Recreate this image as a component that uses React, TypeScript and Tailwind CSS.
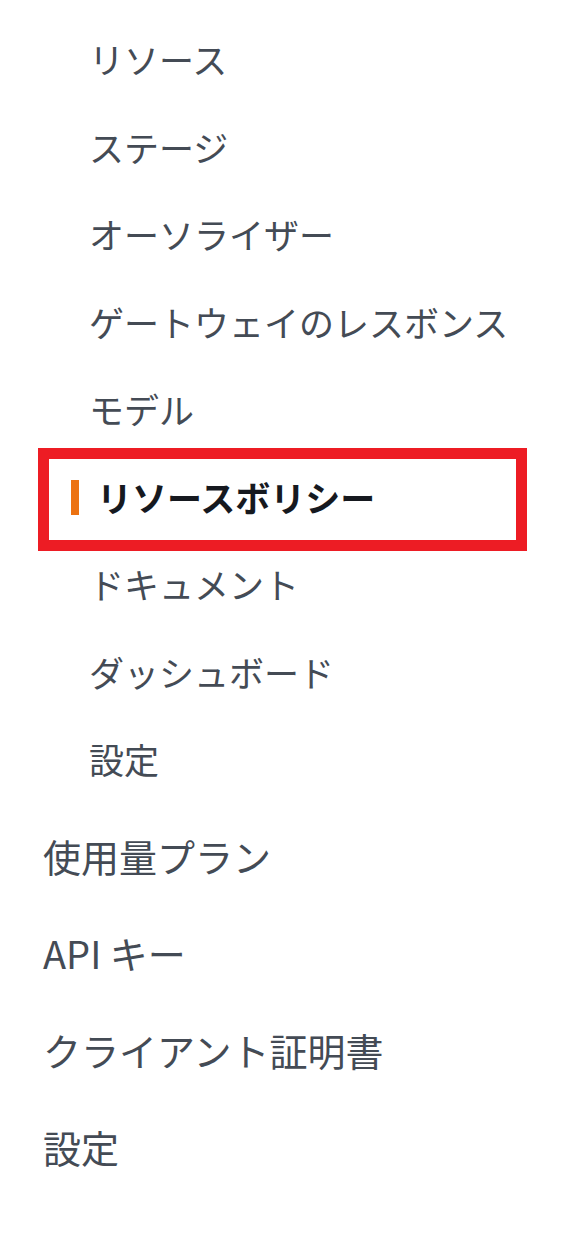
const subItems = [
  "リソース",
  "ステージ",
  "オーソライザー",
  "ゲートウェイのレスボンス",
  "モデル",
  "リソースボリシー",
  "ドキュメント",
  "ダッシュボード",
  "設定",
];

const topItems = ["使用量プラン", "API キー", "クライアント証明書", "設定"];

const ACTIVE = "リソースボリシー";

export default function App() {
  return (
    <div
      className="w-[586px] h-[1245px] bg-white overflow-hidden pt-[15px]"
      style={{ fontFamily: '"Noto Sans CJK JP", "Noto Sans", sans-serif' }}
    >
      <ul>
        {subItems.map((item) =>
          item === ACTIVE ? (
            <li key={item} className="relative h-[87.5px] flex items-center">
              {/* highlight box */}
              <span className="absolute left-[38px] top-[-5px] w-[489px] h-[103px] border-[11px] border-[#ed1c24]" />
              <span className="ml-[71px] w-[8px] h-[35px] bg-[#ec7211] mt-[3px]" />
              <span className="ml-[18px] text-[35px] font-bold text-[#16191f] leading-none">
                {item}
              </span>
            </li>
          ) : (
            <li
              key={item}
              className="h-[87.5px] flex items-center pl-[89px] text-[35px] text-[#444b55] leading-none"
            >
              {item}
            </li>
          )
        )}
      </ul>
      <ul className="mt-[5px]">
        {topItems.map((item, i) => (
          <li
            key={i}
            className="h-[97px] flex items-center pl-[43px] text-[38px] text-[#444b55] leading-none"
          >
            {item}
          </li>
        ))}
      </ul>
    </div>
  );
}
